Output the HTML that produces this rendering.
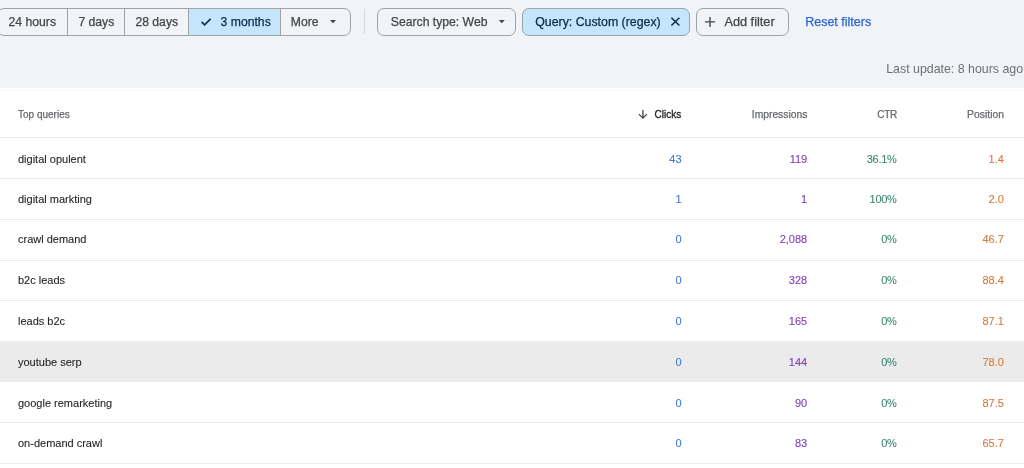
<!DOCTYPE html>
<html><head><meta charset="utf-8"><title>Performance</title>
<style>
html,body{margin:0;padding:0}
body{width:1024px;height:468px;overflow:hidden;background:#f0f3f8;position:relative;font-family:"Liberation Sans",sans-serif}
#root{position:absolute;left:0;top:0;width:1024px;height:468px;overflow:hidden;background:#f0f3f8;will-change:transform}
.a{position:absolute;white-space:nowrap}
.tb{font-size:12.2px;line-height:12px;color:#444746;-webkit-text-stroke:0.25px #444746}
.grp{position:absolute;left:-3px;top:8px;width:352px;height:26px;border:1px solid #a0a2a4;border-radius:7px;overflow:hidden}
.dv{position:absolute;top:0;bottom:0;width:1px;background:#a0a2a4}
.btn{position:absolute;top:8px;height:26px;border:1px solid #a0a2a4;border-radius:7px}
.card{position:absolute;left:0;top:88px;width:1024px;height:380px;background:#fff}
.hl{position:absolute;left:0;width:1024px;height:1px;background:#eaebed}
.th{font-size:10px;line-height:10px;color:#66696d;-webkit-text-stroke:0.25px #66696d}
.td{font-size:11px;line-height:11px;color:#262626;-webkit-text-stroke:0.1px #262626}
.num{text-align:right}
.c1{color:#4279d5;-webkit-text-stroke-color:#4279d5}.c2{color:#8240b6;-webkit-text-stroke-color:#8240b6}
.c3{color:#3a8874;-webkit-text-stroke-color:#3a8874}.c4{color:#d8793a;-webkit-text-stroke-color:#d8793a}
</style></head><body>
<div id="root">
<div class="grp">
<div style="position:absolute;left:191px;top:0;width:91px;height:26px;background:#c5e5fc"></div>
<div class="dv" style="left:69px"></div><div class="dv" style="left:126px"></div><div class="dv" style="left:190px"></div><div class="dv" style="left:282px"></div>
</div>
<div id="t24" class="a tb" style="left:8.6px;top:16px">24 hours</div>
<div id="t7" class="a tb" style="left:78.4px;top:16px">7 days</div>
<div id="t28" class="a tb" style="left:135.4px;top:16px">28 days</div>
<svg class="a" style="left:0;top:0" width="220" height="40"><path d="M201.6 21.9 L204.6 24.9 L210.6 18.9" fill="none" stroke="#0e2a47" stroke-width="1.6"/></svg>
<div id="t3m" class="a tb" style="left:220.6px;top:16px;color:#0e2a47;-webkit-text-stroke-color:#0e2a47">3 months</div>
<div id="tmore" class="a tb" style="left:290.8px;top:16px">More</div>
<svg class="a" style="left:0;top:0" width="520" height="40"><path d="M330 20 H336 L333 23.2 Z" fill="#444746"/><path d="M498.8 20 H504.8 L501.8 23.2 Z" fill="#444746"/></svg>
<div class="a" style="left:364px;top:9px;width:1px;height:25px;background:#d5d8dd"></div>
<div class="btn" style="left:377px;width:137px"></div>
<div id="tst" class="a tb" style="left:390.8px;top:16px">Search type: Web</div>
<div class="btn" style="left:522px;width:166px;background:#c5e5fc"></div>
<div id="tq" class="a tb" style="left:535.2px;top:16px;font-size:12.35px;color:#0e2a47;-webkit-text-stroke-color:#0e2a47">Query: Custom (regex)</div>
<svg class="a" style="left:0;top:0" width="720" height="40"><path d="M671.4 17.8 L679.4 25.5 M679.4 17.8 L671.4 25.5" fill="none" stroke="#0e2a47" stroke-width="1.5"/>
<path d="M710 16.9 V26.9 M704.9 21.9 H715.1" fill="none" stroke="#444746" stroke-width="1.35"/></svg>
<div class="btn" style="left:696px;width:91px"></div>
<div id="taf" class="a tb" style="left:724.4px;top:16px;font-size:12.75px">Add filter</div>
<div id="trf" class="a tb" style="left:805.2px;top:16px;font-size:12.5px;color:#2d63d2;-webkit-text-stroke-color:#2d63d2">Reset filters</div>
<div id="tlu" class="a" style="left:886.2px;top:63px;font-size:12.38px;line-height:12px;color:#6c6f73">Last update: 8 hours ago</div>
<div class="card"></div><div class="a" style="left:0;top:90px;width:1024px;height:1px;background:#f4f5f7"></div>
<div class="hl" style="top:137px"></div>
<div id="thq" class="a th" style="left:18px;top:110px">Top queries</div>
<svg class="a" style="left:0;top:0" width="660" height="130"><path d="M642.9 109.9 V118 M638.9 114.1 L642.9 118.1 L646.9 114.1" fill="none" stroke="#444746" stroke-width="1.3"/></svg>
<div id="thc" class="a th" style="left:654.6px;top:110px;color:#1f1f1f;-webkit-text-stroke:0.3px #1f1f1f">Clicks</div>
<div id="thi" class="a th" style="right:216.7px;top:110px;font-size:10.3px">Impressions</div>
<div id="thr" class="a th" style="right:126.9px;top:110px;letter-spacing:-0.2px">CTR</div>
<div id="thp" class="a th" style="right:20px;top:110px;font-size:10.4px">Position</div>

<div class="hl" style="top:178px"></div>
<div class="a td" style="left:18px;top:154px">digital opulent</div>
<div class="a td num c1" style="right:342.4px;top:154px">43</div>
<div class="a td num c2" style="right:216.8px;top:154px">119</div>
<div class="a td num c3" style="right:127.5px;top:154px;letter-spacing:-0.3px;padding-right:0">36.1%</div>
<div class="a td num c4" style="right:20.2px;top:154px">1.4</div>
<div class="hl" style="top:219px"></div>
<div class="a td" style="left:18px;top:194px">digital markting</div>
<div class="a td num c1" style="right:342.4px;top:194px">1</div>
<div class="a td num c2" style="right:216.8px;top:194px">1</div>
<div class="a td num c3" style="right:127.5px;top:194px;letter-spacing:-0.3px;padding-right:0">100%</div>
<div class="a td num c4" style="right:20.2px;top:194px">2.0</div>
<div class="hl" style="top:260px"></div>
<div class="a td" style="left:18px;top:234px">crawl demand</div>
<div class="a td num c1" style="right:342.4px;top:234px">0</div>
<div class="a td num c2" style="right:216.8px;top:234px">2,088</div>
<div class="a td num c3" style="right:127.5px;top:234px;letter-spacing:-0.3px;padding-right:0">0%</div>
<div class="a td num c4" style="right:20.2px;top:234px">46.7</div>
<div class="hl" style="top:300px"></div>
<div class="a td" style="left:18px;top:275px">b2c leads</div>
<div class="a td num c1" style="right:342.4px;top:275px">0</div>
<div class="a td num c2" style="right:216.8px;top:275px">328</div>
<div class="a td num c3" style="right:127.5px;top:275px;letter-spacing:-0.3px;padding-right:0">0%</div>
<div class="a td num c4" style="right:20.2px;top:275px">88.4</div>
<div class="hl" style="top:341px"></div>
<div class="a td" style="left:18px;top:316px">leads b2c</div>
<div class="a td num c1" style="right:342.4px;top:316px">0</div>
<div class="a td num c2" style="right:216.8px;top:316px">165</div>
<div class="a td num c3" style="right:127.5px;top:316px;letter-spacing:-0.3px;padding-right:0">0%</div>
<div class="a td num c4" style="right:20.2px;top:316px">87.1</div>
<div class="a" style="left:0;top:341px;width:1024px;height:41px;background:#ebebeb"></div>
<div class="a td" style="left:18px;top:357px">youtube serp</div>
<div class="a td num c1" style="right:342.4px;top:357px">0</div>
<div class="a td num c2" style="right:216.8px;top:357px">144</div>
<div class="a td num c3" style="right:127.5px;top:357px;letter-spacing:-0.3px;padding-right:0">0%</div>
<div class="a td num c4" style="right:20.2px;top:357px">78.0</div>
<div class="hl" style="top:422px"></div>
<div class="a td" style="left:18px;top:398px">google remarketing</div>
<div class="a td num c1" style="right:342.4px;top:398px">0</div>
<div class="a td num c2" style="right:216.8px;top:398px">90</div>
<div class="a td num c3" style="right:127.5px;top:398px;letter-spacing:-0.3px;padding-right:0">0%</div>
<div class="a td num c4" style="right:20.2px;top:398px">87.5</div>
<div class="hl" style="top:463px"></div>
<div class="a td" style="left:18px;top:438px">on-demand crawl</div>
<div class="a td num c1" style="right:342.4px;top:438px">0</div>
<div class="a td num c2" style="right:216.8px;top:438px">83</div>
<div class="a td num c3" style="right:127.5px;top:438px;letter-spacing:-0.3px;padding-right:0">0%</div>
<div class="a td num c4" style="right:20.2px;top:438px">65.7</div>
</div>
</body></html>
